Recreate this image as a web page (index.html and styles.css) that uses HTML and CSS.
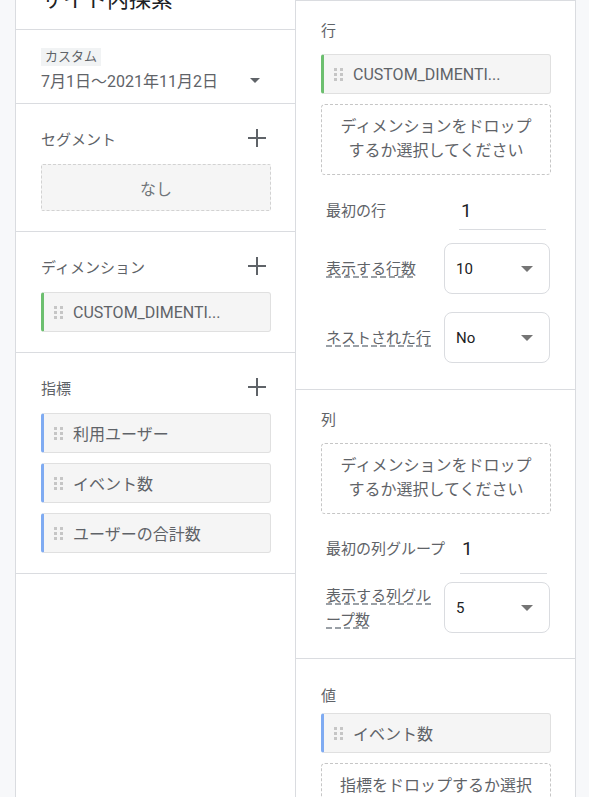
FILE: index.html
```html
<!DOCTYPE html>
<html lang="ja">
<head>
<meta charset="utf-8">
<title>サイト内探索</title>
<link rel="stylesheet" href="styles.css">
</head>
<body>
<div class="page">
  <aside class="left">
    <div class="lsec title-sec"><div class="title">サイト内探索</div></div>
    <div class="lsec date-sec">
      <div class="tag-row"><span class="tag">カスタム</span></div>
      <div class="date-row">
        <span>7月1日〜2021年11月2日</span>
        <svg class="caret-sm" width="10" height="5" viewBox="0 0 10 5"><polygon points="0,0 10,0 5,5" fill="#5f6368"/></svg>
      </div>
    </div>
    <div class="lsec">
      <div class="sec-head"><span>セグメント</span><svg class="plus" width="18" height="18" viewBox="0 0 18 18"><path d="M9 0V18M0 9H18" stroke="#5f6368" stroke-width="2"/></svg></div>
      <div class="empty-box">なし</div>
    </div>
    <div class="lsec">
      <div class="sec-head"><span>ディメンション</span><svg class="plus" width="18" height="18" viewBox="0 0 18 18"><path d="M9 0V18M0 9H18" stroke="#5f6368" stroke-width="2"/></svg></div>
      <div class="chips">
        <div class="chip green"><svg class="handle" width="10" height="13" viewBox="0 0 10 13"><g fill="#c6c6c6"><rect x="0" y="0" width="3" height="3"/><rect x="6" y="0" width="3" height="3"/><rect x="0" y="5" width="3" height="3"/><rect x="6" y="5" width="3" height="3"/><rect x="0" y="10" width="3" height="3"/><rect x="6" y="10" width="3" height="3"/></g></svg><span>CUSTOM_DIMENTI...</span></div>
      </div>
    </div>
    <div class="lsec">
      <div class="sec-head"><span>指標</span><svg class="plus" width="18" height="18" viewBox="0 0 18 18"><path d="M9 0V18M0 9H18" stroke="#5f6368" stroke-width="2"/></svg></div>
      <div class="chips">
        <div class="chip blue"><svg class="handle" width="10" height="13" viewBox="0 0 10 13"><g fill="#c6c6c6"><rect x="0" y="0" width="3" height="3"/><rect x="6" y="0" width="3" height="3"/><rect x="0" y="5" width="3" height="3"/><rect x="6" y="5" width="3" height="3"/><rect x="0" y="10" width="3" height="3"/><rect x="6" y="10" width="3" height="3"/></g></svg><span>利用ユーザー</span></div>
        <div class="chip blue"><svg class="handle" width="10" height="13" viewBox="0 0 10 13"><g fill="#c6c6c6"><rect x="0" y="0" width="3" height="3"/><rect x="6" y="0" width="3" height="3"/><rect x="0" y="5" width="3" height="3"/><rect x="6" y="5" width="3" height="3"/><rect x="0" y="10" width="3" height="3"/><rect x="6" y="10" width="3" height="3"/></g></svg><span>イベント数</span></div>
        <div class="chip blue"><svg class="handle" width="10" height="13" viewBox="0 0 10 13"><g fill="#c6c6c6"><rect x="0" y="0" width="3" height="3"/><rect x="6" y="0" width="3" height="3"/><rect x="0" y="5" width="3" height="3"/><rect x="6" y="5" width="3" height="3"/><rect x="0" y="10" width="3" height="3"/><rect x="6" y="10" width="3" height="3"/></g></svg><span>ユーザーの合計数</span></div>
      </div>
    </div>
  </aside>

  <main class="right">
    <section class="rsec sec-rows">
      <div class="rtitle">行</div>
      <div class="chip green"><svg class="handle" width="10" height="13" viewBox="0 0 10 13"><g fill="#c6c6c6"><rect x="0" y="0" width="3" height="3"/><rect x="6" y="0" width="3" height="3"/><rect x="0" y="5" width="3" height="3"/><rect x="6" y="5" width="3" height="3"/><rect x="0" y="10" width="3" height="3"/><rect x="6" y="10" width="3" height="3"/></g></svg><span>CUSTOM_DIMENTI...</span></div>
      <div class="drop">ディメンションをドロップするか選択してください</div>
      <div class="field input-row r1">
        <div class="flabel plain">最初の行</div>
        <div class="input"><span>1</span></div>
      </div>
      <div class="field select-row r2">
        <div class="flabel"><span class="dotted">表示する行数</span></div>
        <div class="select"><span>10</span><svg width="12" height="6" viewBox="0 0 12 6"><polygon points="0,0 12,0 6,6" fill="#757575"/></svg></div>
      </div>
      <div class="field select-row r3">
        <div class="flabel"><span class="dotted">ネストされた行</span></div>
        <div class="select"><span>No</span><svg width="12" height="6" viewBox="0 0 12 6"><polygon points="0,0 12,0 6,6" fill="#757575"/></svg></div>
      </div>
    </section>
    <section class="rsec sec-cols">
      <div class="rtitle">列</div>
      <div class="drop">ディメンションをドロップするか選択してください</div>
      <div class="field input-row c1">
        <div class="flabel plain nowrap">最初の列グループ</div>
        <div class="input tall"><span>1</span></div>
      </div>
      <div class="field select-row c2">
        <div class="flabel"><span class="dotted">表示する列グループ数</span></div>
        <div class="select"><span>5</span><svg width="12" height="6" viewBox="0 0 12 6"><polygon points="0,0 12,0 6,6" fill="#757575"/></svg></div>
      </div>
    </section>
    <section class="rsec sec-values">
      <div class="rtitle">値</div>
      <div class="chip blue"><svg class="handle" width="10" height="13" viewBox="0 0 10 13"><g fill="#c6c6c6"><rect x="0" y="0" width="3" height="3"/><rect x="6" y="0" width="3" height="3"/><rect x="0" y="5" width="3" height="3"/><rect x="6" y="5" width="3" height="3"/><rect x="0" y="10" width="3" height="3"/><rect x="6" y="10" width="3" height="3"/></g></svg><span>イベント数</span></div>
      <div class="drop">指標をドロップするか選択してください</div>
    </section>
  </main>
</div>
</body>
</html>
```

FILE: styles.css
```css
* { box-sizing: border-box; }
html, body { margin: 0; padding: 0; }
body {
  background: #f7f8fa;
  font-family: Roboto, "Noto Sans CJK JP", sans-serif;
  color: #5f6368;
  height: 797px;
  overflow: hidden;
}
.page {
  display: grid;
  grid-template-columns: 15px 280px 281px 13px;
  height: 797px;
}
.left {
  grid-column: 2;
  background: #fff;
  border-left: 1px solid #dadce0;
}
.right {
  grid-column: 3;
  background: #fff;
  border: 1px solid #dadce0;
  border-bottom: none;
}

/* left sections */
.lsec {
  border-bottom: 1px solid #dadce0;
  padding: 22px 24px 20px 25px;
}
.title-sec { padding: 0 25px 15px; }
.title {
  margin-top: -14px;
  line-height: 28px;
  font-size: 22px;
  color: #202124;
}
.date-sec { padding: 18px 24px 11px 25px; }
.tag-row { display: flex; height: 18px; }
.tag {
  background: #f1f3f4;
  font-size: 13px;
  line-height: 18px;
  padding: 0 4px;
  color: #5f6368;
}
.date-row {
  margin-top: 2px;
  height: 24px;
  display: flex;
  align-items: center;
  justify-content: space-between;
  font-size: 16px;
}
.caret-sm { margin-right: 11px; }

.sec-head {
  height: 24px;
  display: flex;
  align-items: center;
  justify-content: space-between;
  font-size: 15px;
}
.plus { margin-right: 5px; }
.empty-box {
  margin-top: 14px;
  height: 47px;
  border: 1px dashed #d2d2d2;
  background: #f5f5f5;
  border-radius: 2px;
  display: flex;
  align-items: center;
  justify-content: center;
  font-size: 16px;
  color: #70757a;
}
.chips {
  margin-top: 14px;
  display: flex;
  flex-direction: column;
  gap: 10px;
}

/* chip */
.chip {
  height: 40px;
  display: flex;
  align-items: center;
  background: #f5f5f5;
  border: 1px solid #e0e0e0;
  border-radius: 3px;
  padding-left: 10px;
  font-size: 16px;
  color: #5f6368;
  white-space: nowrap;
}
.chip.green { border-left: 3px solid #6cbf6f; }
.chip.blue { border-left: 3px solid #7fabf2; }
.handle { margin-right: 9px; flex: none; }

/* right sections */
.rsec {
  border-bottom: 1px solid #dadce0;
  padding: 18px 24px 26px 25px;
}
.sec-cols { padding-bottom: 25px; }
.sec-values { padding-top: 25px; border-bottom: none; }
.rtitle {
  line-height: 24px;
  font-size: 15px;
  margin-bottom: 11px;
}
.sec-values .rtitle { margin-bottom: 5px; }
.drop {
  margin-top: 10px;
  border: 1px dashed #c6c6c6;
  border-radius: 4px;
  padding: 10px 12px 11px;
  text-align: center;
  font-size: 16px;
  line-height: 24px;
  color: #5f6368;
}
.sec-cols .drop { margin-top: 0; }

.field {
  display: flex;
  padding-left: 5px;
}
.flabel {
  width: 118px;
  flex: none;
  font-size: 15px;
  line-height: 24px;
}
.flabel.plain { line-height: 36px; }
.nowrap { white-space: nowrap; }
.input-row { align-items: flex-start; }
.select-row { align-items: center; }
.r1 { margin-top: 18px; }
.r2 { margin-top: 13px; }
.r3 { margin-top: 18px; }
.c1 { margin-top: 17px; }
.c2 { margin-top: 8px; }

.input {
  width: 87px;
  margin-left: 15px;
  height: 37px;
  border-bottom: 1px solid #dadce0;
  font-size: 19px;
  line-height: 36px;
  color: #202124;
  padding-left: 2px;
}
.input.tall { height: 43px; margin-left: 16px; }

.dotted {
  background-image: repeating-linear-gradient(90deg, #9aa0a6 0 6px, transparent 6px 9px);
  background-size: 100% 2px;
  background-position: left bottom;
  background-repeat: no-repeat;
  -webkit-box-decoration-break: clone;
  box-decoration-break: clone;
}
.select {
  width: 106px;
  height: 51px;
  flex: none;
  border: 1px solid #dadce0;
  border-radius: 8px;
  padding: 0 16px 0 11px;
  display: flex;
  align-items: center;
  justify-content: space-between;
  font-size: 15px;
  color: #202124;
}
```
